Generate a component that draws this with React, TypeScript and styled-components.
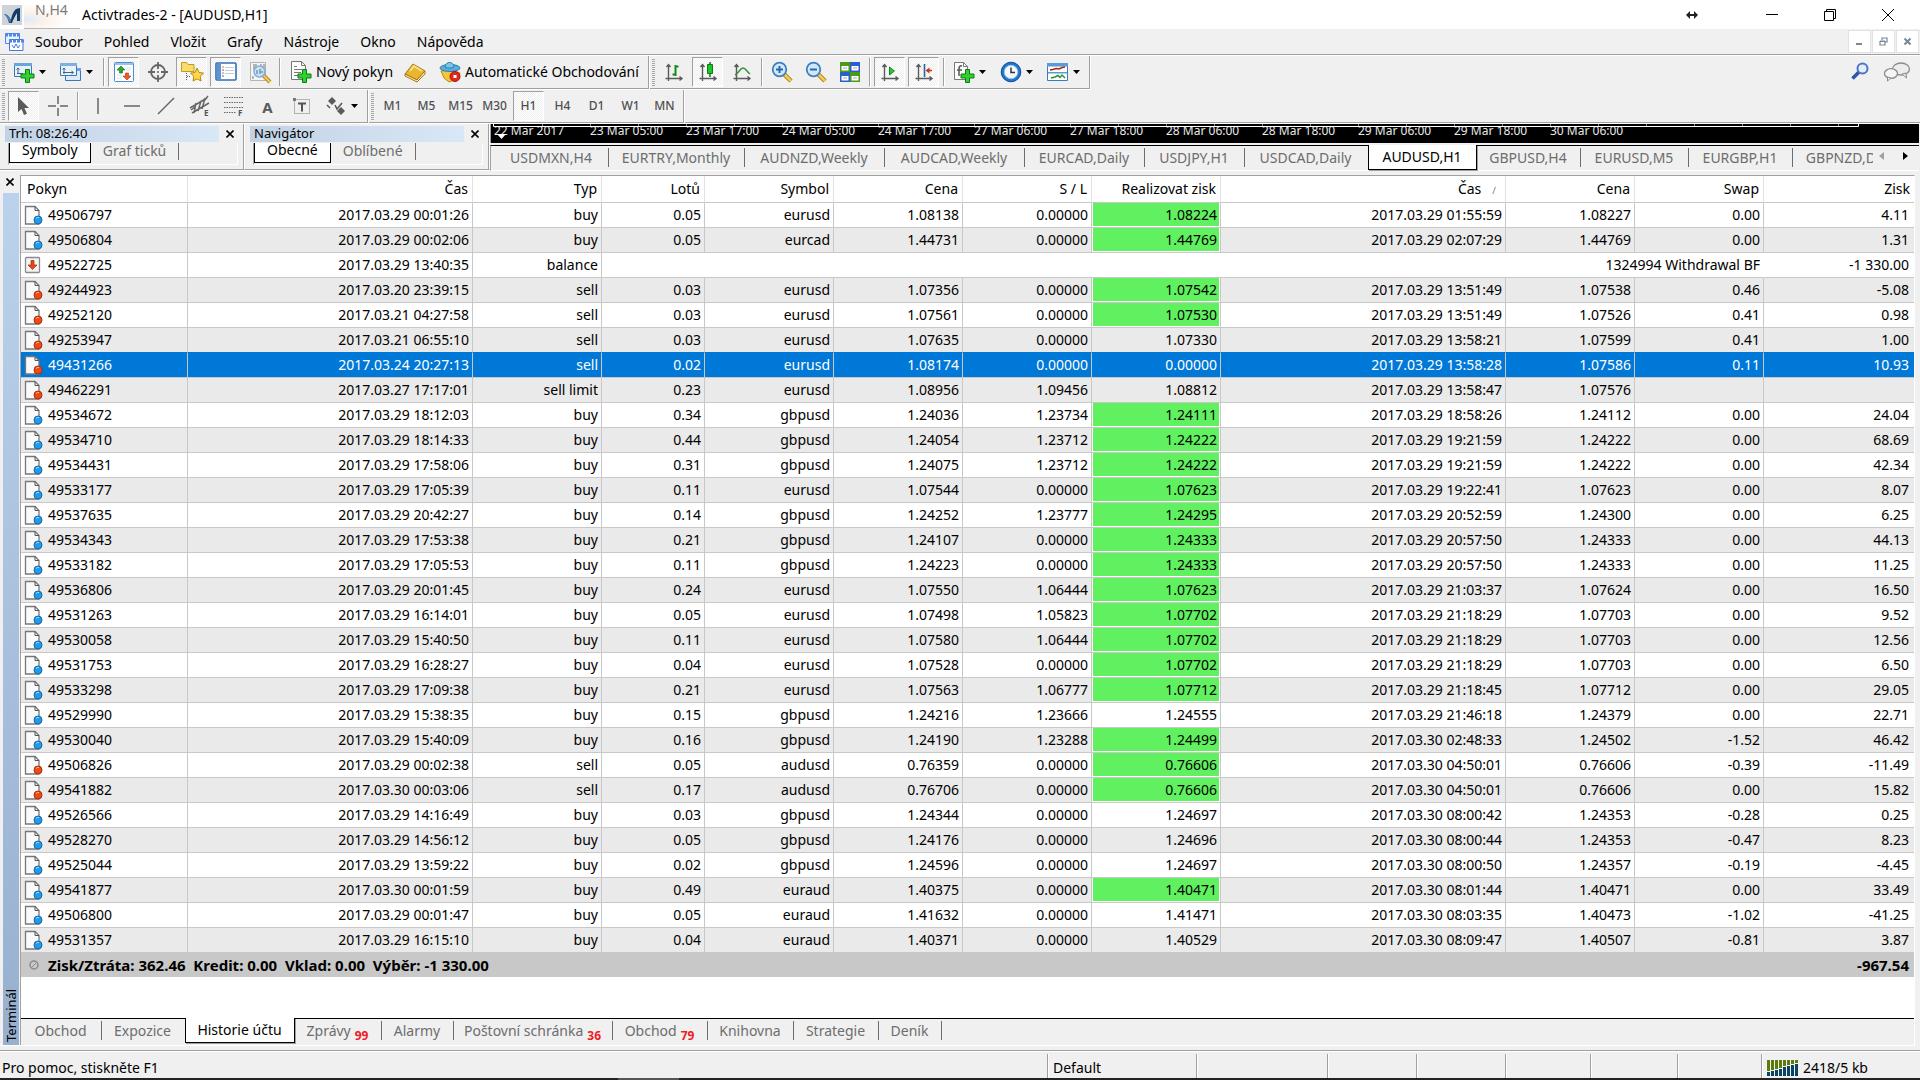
import React from "react";
import styled, { createGlobalStyle, css } from "styled-components";

const FACE = "#f0f0f0";
const EDGE = "#a0a0a0";
const GRID = "#c8c8c8";
const MUTED = "#6d6d6d";

const GlobalStyle = createGlobalStyle`
  *, *::before, *::after { box-sizing: border-box; }
  body {
    margin: 0;
    background: ${FACE};
    color: #000;
    font: 14px/20px "Noto Sans", "Open Sans", sans-serif;
  }
  button {
    margin: 0;
    padding: 0;
    border: 0;
    background: none;
    color: inherit;
    font: inherit;
    white-space: nowrap;
  }
  svg { display: block; flex: none; }
`;

const Window = styled.div`
  display: flex;
  flex-direction: column;
  min-height: 100vh;
  overflow: hidden;
`;

/* ---------- title bar and menu ---------- */

const TitleBar = styled.header`
  display: flex;
  align-items: center;
  height: 29px;
  padding: 0 3px 0 2px;
  background: #fff;
`;

const Ghost = styled.span`
  width: 56px;
  margin: 0 2px;
  padding: 0 0 8px 11px;
  color: #7c7c7c;
  line-height: 20px;
  background: radial-gradient(ellipse at 0 70%, #dceaf6 0, #fdf3ec 30%, #fff 60%);
  border-bottom: 1px solid #b8b4b0;
`;

const Title = styled.h1`
  flex: 1;
  margin: 0;
  font-size: 14px;
  font-weight: 400;
`;

const ResizeMark = styled.span`
  padding-right: 45px;
`;

const CaptionButton = styled.button`
  display: grid;
  place-items: center;
  width: 58px;
  height: 29px;
`;

const MenuBar = styled.nav`
  display: flex;
  align-items: center;
  height: 27px;
  padding: 0 1px 1px 4px;
  border-bottom: 1px solid #fff;
  box-shadow: inset 0 -1px 0 ${EDGE};
`;

const MenuList = styled.div`
  display: flex;
  flex: 1;
  gap: 21px;
  margin-left: 10px;
`;

const ChildButton = styled.button`
  display: grid;
  place-items: center;
  width: 23px;
  height: 23px;
  margin-left: 1px;
  border: 1px solid #e2e2e2;
  background: #fff;
`;

/* ---------- toolbars ---------- */

const ToolRow = styled.div`
  display: flex;
  height: 34px;
  padding-right: 8px;
`;

const LastToolRow = styled(ToolRow)`
  border-bottom: 1px solid #fff;
  box-shadow: inset 0 -1px 0 ${EDGE};
`;

const Toolbar = styled.div<{ $open?: boolean }>`
  display: flex;
  align-items: center;
  gap: 3px;
  height: 33px;
  padding: 0 3px 1px 2px;
  margin-right: 1px;
  border-right: 1px solid ${EDGE};
  box-shadow: 1px 0 0 #fff;
  ${(p) =>
    !p.$open &&
    css`
      border-bottom: 1px solid ${EDGE};
      box-shadow: 1px 1px 0 #fff;
      padding-bottom: 0;
    `}
`;

const Handle = styled.span`
  width: 3px;
  height: 27px;
  background: repeating-linear-gradient(#a8a8a8 0 1px, ${FACE} 1px 2px);
`;

const Divider = styled.span`
  width: 2px;
  height: 28px;
  margin-left: 1px;
  background: linear-gradient(90deg, ${EDGE} 50%, #fff 50%);
`;

const ToolButton = styled.button<{ $on?: boolean }>`
  display: flex;
  align-items: center;
  justify-content: center;
  width: 31px;
  height: 30px;
  border: 1px solid transparent;
  ${(p) =>
    p.$on &&
    css`
      border-color: ${EDGE} #fff #fff ${EDGE};
      background: repeating-conic-gradient(#fff 0 25%, #efefef 0 50%) 0 0 / 2px 2px;
    `}
`;

const PeriodButton = styled(ToolButton)`
  color: #505050;
  font-size: 12px;
  font-weight: 500;
`;

const DropButton = styled(ToolButton)`
  justify-content: flex-start;
  gap: 4px;
  width: 44px;
  padding-left: 4px;
`;

const CaptionedTool = styled(ToolButton)<{ $width: number }>`
  justify-content: flex-start;
  gap: 4px;
  width: ${(p) => p.$width}px;
  padding-left: 5px;
`;

const RowTail = styled.div`
  display: flex;
  align-items: flex-start;
  gap: 14px;
  margin-left: auto;
  padding: 6px 1px 0 0;
`;

/* ---------- docked panes ---------- */

const Panes = styled.div`
  display: flex;
  height: 47px;
`;

const DockPane = styled.section`
  width: 245px;
  height: 46px;
  padding: 2px 6px 5px 5px;
  border-right: 1px solid #fff;
  border-bottom: 1px solid ${EDGE};
  box-shadow: inset -1px 0 0 ${EDGE}, 0 1px 0 #fff;
`;

const PaneHead = styled.div`
  display: flex;
  justify-content: space-between;
  align-items: center;
  height: 16px;
  padding-right: 2px;
`;

const PaneName = styled.h2`
  flex: 1;
  height: 16px;
  margin: 0 4px 0 0;
  padding-left: 4px;
  font-size: 13px;
  font-weight: 400;
  line-height: 15px;
  background: linear-gradient(90deg, #c1d2e4, #d9e8f6);
`;

const CloseButton = styled.button`
  display: grid;
  place-items: center;
  width: 13px;
  height: 13px;
`;

const PaneTabs = styled.div`
  display: flex;
  height: 22px;
  margin: 1px 0 0 3px;
  border-right: 1px solid #fff;
  border-bottom: 1px solid #fff;
  border-left: 1px solid ${EDGE};
`;

const PaneTab = styled.button<{ $on?: boolean }>`
  height: 20px;
  padding: 0 12px;
  color: ${MUTED};
  line-height: 14px;
  padding-bottom: 5px;
  ${(p) =>
    p.$on
      ? css`
          border: solid #000;
          border-width: 0 1px 1px;
          background: #fff;
          color: #000;
        `
      : css`
          height: 17px;
          padding-bottom: 2px;
          border-right: 1px solid ${MUTED};
        `}
`;

const ChartPane = styled.section`
  display: flex;
  flex: 1;
  flex-direction: column;
  min-width: 0;
  margin-right: 1px;
`;

const TimeAxis = styled.div`
  position: relative;
  display: flex;
  height: 19px;
  padding-left: 3px;
  background: #000;
  color: #e8e8e8;
  border-left: 1px solid ${EDGE};
`;

const AxisLine = styled.svg`
  position: absolute;
  top: 0;
  left: 0;
`;

const AxisLabel = styled.span`
  flex: none;
  width: 96px;
  font-size: 12px;
  line-height: 13px;
  white-space: nowrap;
`;

const ChartTabs = styled.div`
  display: flex;
  height: 26px;
  margin-top: 2px;
  border-top: 1px solid #000;
  border-bottom: 1px solid #fff;
  border-left: 1px solid ${EDGE};
`;

const ClippedTabs = styled.div`
  display: flex;
  flex: 1;
  min-width: 0;
  height: 26px;
  margin-top: -1px;
  padding: 1px 0 0 4px;
  overflow: hidden;
`;

const Tab = styled.button<{ $width: number; $on?: boolean; $last?: boolean }>`
  display: flex;
  flex: none;
  align-items: center;
  justify-content: center;
  gap: 4px;
  width: ${(p) => p.$width}px;
  height: 19px;
  margin-top: 2px;
  padding-right: 1px;
  border-right: 1px solid ${(p) => (p.$last ? "transparent" : MUTED)};
  color: ${MUTED};
  ${(p) =>
    p.$on &&
    css`
      height: 25px;
      margin-top: -1px;
      border: solid #000;
      border-width: 0 1px 1px;
      background: #fff;
      box-shadow: 1px 1px 0 ${EDGE};
      color: #000;
    `}
`;

const Scroller = styled.div`
  display: flex;
  align-items: center;
  gap: 16px;
  width: 46px;
  padding: 0 0 4px 6px;
`;

const ScrollButton = styled.button`
  width: 8px;
`;

/* ---------- terminal ---------- */

const Terminal = styled.section`
  display: flex;
  flex: 1;
  margin: 4px 5px 4px 0;
  border-bottom: 1px solid #fff;
`;

const SideRail = styled.div`
  display: flex;
  flex-direction: column;
  width: 20px;
  padding: 0 1px 0 3px;
`;

const RailGrip = styled.div`
  flex: 1;
  width: 16px;
  margin-top: 5px;
  padding-top: 3px;
  background: linear-gradient(#97b0cf, #bbd2ec);
  writing-mode: vertical-rl;
  transform: rotate(180deg);
  font-size: 13px;
  line-height: 16px;
`;

const Ledger = styled.div`
  display: flex;
  flex: 1;
  flex-direction: column;
  min-width: 0;
  border-top: 1px solid ${EDGE};
  border-right: 1px solid #fff;
  border-left: 1px solid ${EDGE};
`;

const Sheet = styled.div`
  flex: 1;
  background: #fff;
`;

const Table = styled.table`
  width: 100%;
  table-layout: fixed;
  border-collapse: separate;
  border-spacing: 0;
  text-align: right;
`;

const HeadCell = styled.th<{ $left?: boolean }>`
  height: 27px;
  padding: 0 4px 0 6px;
  border-right: 1px solid #e2e2e2;
  border-bottom: 1px solid ${GRID};
  font-weight: 400;
  line-height: 24px;
  text-align: ${(p) => (p.$left ? "left" : "right")};
  white-space: nowrap;
  &:last-child { border-right: 0; }
`;

const SortMark = styled.span`
  padding: 0 5px 0 11px;
  color: #777;
  font-size: 10px;
  line-height: 10px;
`;

const Cell = styled.td<{ $hit?: boolean; $bare?: boolean }>`
  height: 25px;
  padding: 0 3px;
  border-right: 1px solid ${(p) => (p.$bare ? "transparent" : GRID)};
  border-bottom: 1px solid ${GRID};
  line-height: 24px;
  white-space: nowrap;
  &:last-child {
    padding-right: 5px;
    border-right: 0;
  }
  ${(p) =>
    p.$hit &&
    css`
      background: #60f060;
      box-shadow: inset 1px 0 0 #fff, inset -1px -1px 0 #fff;
    `}
`;

const Row = styled.tr<{ $selected?: boolean; $beforeSelected?: boolean }>`
  &:nth-child(even) { background: #eaeaea; }
  &:last-child ${Cell} {
    height: 24px;
    border-bottom: 0;
  }
  ${(p) => p.$beforeSelected && css`${Cell} { border-bottom-color: #0078d7; }`}
  ${(p) =>
    p.$selected &&
    css`
      &&& { background: #0078d7; }
      color: #fff;
    `}
`;

const Ticket = styled.span`
  display: flex;
  align-items: center;
  gap: 5px;
`;

const SummaryCell = styled.td<{ $left?: boolean }>`
  height: 25px;
  padding: 0 5px 0 3px;
  background: ${GRID};
  font-size: 15px;
  font-weight: 700;
  text-align: ${(p) => (p.$left ? "left" : "right")};
  white-space: pre;
`;

const TerminalTabs = styled.div`
  display: flex;
  height: 27px;
  border-top: 1px solid #000;
`;

const Badge = styled.span`
  align-self: flex-end;
  color: #ee1c25;
  font-size: 12px;
  font-weight: 700;
  line-height: 8px;
`;

/* ---------- status bar ---------- */

const StatusBar = styled.footer`
  display: flex;
  height: 28px;
  padding-top: 3px;
  border-top: 1px solid ${EDGE};
  box-shadow: inset 0 1px 0 #fff;
`;

const StatusField = styled.div<{ $width?: number }>`
  display: flex;
  align-items: center;
  gap: 5px;
  padding-top: 4px;
  padding-left: ${(p) => (p.$width ? 5 : 2)}px;
  ${(p) =>
    p.$width
      ? css`
          width: ${p.$width}px;
          border-left: 1px solid ${EDGE};
          box-shadow: inset 1px 0 0 #fff;
        `
      : css`
          flex: 1;
        `}
`;

const TaskEdge = styled.div`
  height: 2px;
  background: linear-gradient(90deg, #222 618px, #555 618px 679px, #222 679px);
`;

/* ---------- drawings ---------- */

const Icon = ({ size = 22, children }: { size?: number; children: React.ReactNode }) => (
  <svg width={size} height={size} viewBox="0 0 22 22" fill="none" overflow="visible" aria-hidden="true">
    {children}
  </svg>
);

const Arrow = () => (
  <svg width="7" height="4" viewBox="0 0 7 4" aria-hidden="true">
    <path d="M0 0h7L3.5 4z" fill="#000" />
  </svg>
);

const Cross = ({ size = 8 }: { size?: number }) => (
  <svg width={size} height={size} viewBox="0 0 8 8" aria-hidden="true">
    <path d="M.5.5l7 7M7.5.5l-7 7" stroke="#000" strokeWidth="1.6" />
  </svg>
);

const Plus = () => (
  <path d="M12.5 8.500h4v4.500h4.500v4h-4.500v4.500h-4v-4.500H8v-4h4.500z" fill="#2fd02f" stroke="#0b7d12" />
);

const Axes = () => (
  <path d="M5.500 4v16M2.500 17.500h16M3.500 6l2-2.500 2 2.500M16.500 15.500l2.500 2-2.500 2" stroke="#5a5a5a" strokeWidth="1.400" />
);

const LogoIcon = () => (
  <svg width="20" height="20" viewBox="0 0 20 20" aria-hidden="true">
    <path d="M0 0h20v20H0z" fill="#cdd3d8" />
    <path d="M2 9c3 0 5 2 7 6 1-6 3-9 5-11l4-1v13h-3V8c-2 3-4 7-5 10H7C6 14 5 11 2 9z" fill="#143c66" />
    <path d="M2 9c3 0 5 2 7 6l-1 3C6 14 5 11 2 9z" fill="#4f86b4" />
  </svg>
);

const ChildIcon = () => (
  <svg width="21" height="20" viewBox="0 0 21 20" fill="none" aria-hidden="true">
    <path d="M1.500 1.500h14v10h-14z" fill="#e8f0fc" stroke="#4f86e8" />
    <path d="M1 3h15" stroke="#4f86e8" strokeWidth="3" strokeDasharray="3 1" />
    <path d="M5.500 7.500h13.500v11H5.500z" fill="#fff" stroke="#3f78e0" />
    <path d="M5 9h15" stroke="#4f86e8" strokeWidth="3" strokeDasharray="3 1" />
    <path d="M8 13l2 3 2-4 2 4 2-3" stroke="#3f78e0" />
  </svg>
);

const NewChartIcon = () => (
  <Icon>
    <path d="M1.500 2.500h17v13h-17z" fill="#e4f1fb" stroke="#3b78b5" />
    <path d="M1 2h18v3H1z" fill="#6aa6da" />
    <path d="M5 7v6M3.500 8.500L5 7l1.500 1.500M4 12.500h6" stroke="#42627e" />
    <Plus />
  </Icon>
);

const ProfilesIcon = () => (
  <Icon>
    <path d="M5.500 7.500h15v12h-15z" fill="#dcebf8" stroke="#3b78b5" />
    <path d="M5 7h16v3H5z" fill="#6aa6da" />
    <path d="M.5 2.500h16v12H.5z" fill="#e9f3fb" stroke="#3b78b5" />
    <path d="M0 2h17v3H0z" fill="#7db2e0" />
    <path d="M4 7v6M2.500 8.500L4 7l1.500 1.500M3 11.500h10M11.500 10l2 1.500-2 1.500" stroke="#42627e" />
  </Icon>
);

const MarketIcon = () => (
  <Icon>
    <rect x="1.500" y="1.500" width="19" height="19" rx="1" fill="#fff" stroke="#4b8fd0" />
    <path d="M2 3h18" stroke="#9cc4ea" strokeWidth="2" />
    <path d="M4 7h3M4 9h3M13 7h5M13 9h5M4 14h5M4 17h5" stroke="#dbe3ea" />
    <path d="M8 5l4 4H9.500v3h-3V9H4z" fill="#27a82f" stroke="#0e7516" strokeWidth=".6" />
    <path d="M14 19l4-4h-2.500v-3h-3v3H10z" fill="#f0572a" stroke="#a8330f" strokeWidth=".6" />
  </Icon>
);

const TargetIcon = () => (
  <Icon>
    <circle cx="11" cy="11" r="7" stroke="#666" strokeWidth="1.800" />
    <path d="M11 1v7M11 14v7M1 11h7M14 11h7" stroke="#666" strokeWidth="1.800" />
    <circle cx="11" cy="11" r="1" fill="#666" />
  </Icon>
);

const NavigatorIcon = () => (
  <Icon>
    <path d="M.5 1.500h5l1.500 2h6v7H.5z" fill="#f8dc70" stroke="#c29a1e" />
    <path d="M5.500 12v8M6 15.500h3" stroke="#555" strokeDasharray="1 1" />
    <path
      d="M16 7l2 4.500 4.500.6-3.300 3.200.8 4.700-4-2.200-4 2.200.8-4.700-3.300-3.200 4.500-.6z"
      fill="#ffd84a"
      stroke="#b98409"
    />
  </Icon>
);

const TerminalIcon = () => (
  <Icon>
    <rect x="1" y="2" width="20" height="17" rx="1" fill="#fff" stroke="#2f6fb4" strokeWidth="1.600" />
    <path d="M2 3h4v15H2z" fill="#5a94d2" />
    <path d="M10 6.500h9M10 9.500h9M10 12.500h9" stroke="#c4ccd6" />
    <path d="M7.500 6h1M7.500 12h1" stroke="#d33" strokeWidth="1.500" />
    <path d="M7.500 9h1M7.500 15h1" stroke="#333" strokeWidth="1.500" />
  </Icon>
);

const TesterIcon = () => (
  <Icon>
    <path d="M1.500 1.500h15v18h-15z" fill="#f4f4f4" stroke="#b4b4b4" />
    <path d="M5 3v6M7 3v5M12 3v7M15 3v9M4 15v3" stroke="#777" />
    <path d="M14 14l7 7" stroke="#b98a1c" strokeWidth="4" />
    <path d="M14 14l7 7" stroke="#f2cc58" strokeWidth="2" />
    <circle cx="10.500" cy="10.500" r="5.500" fill="#c4e1f8" fillOpacity=".85" stroke="#7fb0dc" strokeWidth="1.500" />
    <path d="M8 9v4M11 8v5M13 10v2" stroke="#4b6c8a" />
  </Icon>
);

const OrderIcon = () => (
  <Icon>
    <path d="M1.500.5h10l4 4v14h-14z" fill="#fcfcfc" stroke="#777" />
    <path d="M11.500.5v4h4" stroke="#777" />
    <path d="M4 5.500h3M4 8.500h8M4 11.500h7M4 14.500h4" stroke="#777" />
    <Plus />
  </Icon>
);

const BookIcon = () => (
  <Icon>
    <path d="M1 13L9 3l12 7-8 9z" fill="#eab530" stroke="#a8740c" />
    <path d="M1 13l12 6 8-9v3l-8 8L1 15z" fill="#fff3c4" stroke="#a8740c" />
    <path d="M6 10l4-5 8 5" stroke="#fbe08a" strokeWidth="2" />
  </Icon>
);

const AutoIcon = () => (
  <Icon>
    <path d="M2 10l8-1 11 3-3 6-8 3-5-4z" fill="#f4c63c" stroke="#bb8a12" />
    <ellipse cx="11" cy="7" rx="10" ry="3.500" fill="#57aee0" stroke="#2c7db2" />
    <path d="M6 6c0-6 9-6 9 0-3 1.500-6 1.500-9 0z" fill="#7cc4ec" stroke="#2c7db2" />
    <circle cx="16" cy="15.500" r="5" fill="#e0281c" stroke="#a8140c" />
    <path d="M14.500 14h3v3h-3z" fill="#fff" />
  </Icon>
);

const BarChartIcon = () => (
  <Icon>
    <Axes />
    <path d="M12.500 4v11M9.500 13.500h3M12.500 5.500h3" stroke="#138a1c" strokeWidth="2" />
  </Icon>
);

const CandleIcon = () => (
  <Icon>
    <Axes />
    <path d="M13 1v15" stroke="#0b6b12" strokeWidth="1.400" />
    <path d="M10.500 3.500h5v9h-5z" fill="#1fc42a" stroke="#0b7d12" />
  </Icon>
);

const LineIcon = () => (
  <Icon>
    <Axes />
    <path d="M4 14c4-2 5-7 8-7s4 4 7 6" stroke="#3c9242" strokeWidth="1.500" />
  </Icon>
);

const ZoomIcon = ({ plus }: { plus?: boolean }) => (
  <Icon>
    <path d="M13 13l7 7" stroke="#a67a10" strokeWidth="4.500" />
    <path d="M13 13l7 7" stroke="#f3cd55" strokeWidth="2.500" />
    <circle cx="8.500" cy="8.500" r="6.800" fill="#cfe8fa" stroke="#3f7fbd" strokeWidth="1.800" />
    <path d={plus ? "M5 8.500h7M8.500 5v7" : "M5 8.500h7"} stroke="#2868a8" strokeWidth="2" />
  </Icon>
);

const TilesIcon = () => (
  <Icon>
    <path d="M1 1h10v10H1zM11 11h10v10H11z" fill="#4a9a18" />
    <path d="M11 1h10v10H11zM1 11h10v10H1z" fill="#2a5fcc" />
    <path d="M2.500 5h7v4.500h-7zM12.500 5h7v4.500h-7zM2.500 15h7v4.500h-7zM12.500 15h7v4.500h-7z" fill="#fff" />
    <path d="M4 7h4M14 7h4M4 17h4M14 17h4" stroke="#9ab" />
  </Icon>
);

const AutoScrollIcon = () => (
  <Icon>
    <Axes />
    <path d="M10.500 6v8l5-4z" fill="#2fc43a" stroke="#138a1c" />
  </Icon>
);

const ShiftIcon = () => (
  <Icon>
    <Axes />
    <path d="M11.500 3v13" stroke="#2d6398" strokeWidth="1.600" />
    <path d="M19 9.500h-5" stroke="#c03a14" strokeWidth="1.600" />
    <path d="M16.500 6.500v6l-4-3z" fill="#c03a14" />
  </Icon>
);

const IndicatorIcon = () => (
  <Icon>
    <path d="M1.500 1.500h9l4 4v13h-13z" fill="#fcfcfc" stroke="#777" />
    <path d="M10.500 1.500v4h4" stroke="#777" />
    <path d="M9 5c-3-1-3 2-3 4v6M4 9h5" stroke="#555" strokeWidth="1.500" />
    <Plus />
  </Icon>
);

const ClockIcon = () => (
  <Icon>
    <circle cx="11" cy="11" r="9.800" fill="#1f74cc" stroke="#0f4c94" />
    <circle cx="11" cy="11" r="6.800" fill="#f4f8fc" stroke="#8fc0ee" />
    <path d="M11 6.500V11.500h4" stroke="#333" strokeWidth="1.500" />
  </Icon>
);

const TemplateIcon = () => (
  <Icon>
    <path d="M.5 2.500h20v17H.5z" fill="#fff" stroke="#3a7cc0" />
    <path d="M0 2h21v3.500H0zM1 11h19v1.500H1z" fill="#5a9ad6" />
    <path d="M3 9l3-.5 3-1 3 .5 3-1.500 3-.5" stroke="#a02818" strokeWidth="1.500" />
    <path d="M4 17l4-1 3-1.500 2 2 2-2.500 3 3" stroke="#2c9236" strokeWidth="1.500" />
  </Icon>
);

const SearchIcon = () => (
  <svg width="18" height="18" viewBox="0 0 18 18" fill="none" aria-hidden="true">
    <path d="M8 10l-6.500 6.500" stroke="#2b55ae" strokeWidth="3.500" />
    <circle cx="11.500" cy="6.500" r="5" fill="#e4eefb" stroke="#4a76c8" strokeWidth="2" />
  </svg>
);

const ChatIcon = () => (
  <svg width="28" height="20" viewBox="0 0 28 20" fill="none" aria-hidden="true">
    <ellipse cx="18" cy="7" rx="8.500" ry="6" fill="#ececec" stroke="#8c8c8c" strokeWidth="1.300" />
    <path d="M19 12l4-1 .5 5z" fill="#ececec" stroke="#8c8c8c" />
    <ellipse cx="8" cy="11.500" rx="6.500" ry="4.800" fill="#f6f6f6" stroke="#8c8c8c" strokeWidth="1.300" />
    <path d="M4.500 15l3.500 1-3.500 3z" fill="#f6f6f6" stroke="#8c8c8c" />
  </svg>
);

const PointerIcon = () => (
  <Icon>
    <path d="M5 2v15l3.500-3 2.500 6 3-1.300L11.400 13H16z" fill="#5a5a5a" />
  </Icon>
);

const Strokes = ({ d }: { d: string }) => (
  <Icon><path d={d} stroke="#666" strokeWidth="1.500" /></Icon>
);

const Letter = styled.text`
  font: 700 8px "Noto Sans", sans-serif;
`;

const ChannelIcon = () => (
  <Icon>
    <path d="M1 13L18 3M3 18L20 8M5 18l2-10M9 16l3-10M13 14l3-11M2 15l4-3M15 6l4-5" stroke="#666" strokeWidth="1.500" />
    <Letter x="15" y="21" fill="#555">E</Letter>
  </Icon>
);

const FiboIcon = () => (
  <Icon>
    <path d="M1 2.500h20M1 7.500h20M1 12.500h20M1 17.500h12" stroke="#666" strokeWidth="1.200" strokeDasharray="1.500 1" />
    <Letter x="15" y="21" fill="#555">F</Letter>
  </Icon>
);

const GlyphTool = styled(ToolButton)`
  padding-top: 1px;
  color: #5a5a5a;
  font-size: 15px;
  font-weight: 700;
`;

const LabelIcon = () => (
  <Icon>
    <path d="M3.500 4.500h15v14h-15z" stroke="#777" strokeDasharray="1 1" />
    <path d="M2 3h3v3H2z" fill="#777" />
    <path d="M7 8.500h8M11 8.500v8" stroke="#555" strokeWidth="2" />
  </Icon>
);

const ShapesIcon = () => (
  <Icon>
    <path d="M7 2l4 4-4 4-4-4zM16 12l4 4-4 4-4-4z" fill="#5a5a5a" />
    <path d="M2 10l3 3M10 10l2 4 5-6" stroke="#5a5a5a" strokeWidth="1.600" />
  </Icon>
);

const PageIcon = ({ color, rim }: { color: string; rim: string }) => (
  <svg width="19" height="20" viewBox="0 0 19 20" fill="none" aria-hidden="true">
    <path d="M1.500 1.500h9.500l4 4v13.500H1.500z" fill="#fafafa" stroke="#777" strokeWidth="1.300" />
    <path d="M11 1.500v4h4" stroke="#555" />
    <circle cx="14" cy="15" r="4" fill={color} stroke={rim} />
    <path d="M12 13.500q1-1.500 3-1" stroke="#fff" strokeOpacity=".6" />
  </svg>
);

const BalanceIcon = () => (
  <svg width="19" height="20" viewBox="0 0 19 20" fill="none" aria-hidden="true">
    <rect x="1.500" y="2.500" width="14" height="15" rx="1" fill="#f4f4f4" stroke="#8a8a8a" strokeWidth="1.300" />
    <path d="M7 5.500h3V10h3l-4.500 4.500L4 10h3z" fill="#e04a18" stroke="#a02c08" strokeWidth=".7" />
  </svg>
);

const SummaryIcon = () => (
  <svg width="19" height="20" viewBox="0 0 19 20" fill="none" aria-hidden="true">
    <circle cx="10" cy="10" r="4" stroke="#8c8c8c" strokeWidth="1.500" />
    <path d="M7.500 12.500l5-5" stroke="#8c8c8c" />
  </svg>
);

const TrafficIcon = () => (
  <svg width="31" height="16" viewBox="0 0 31 16" aria-hidden="true">
    {[11, 10, 9, 8, 6, 5, 4, 3].map((h, i) => (
      <g key={i}>
        <rect x={i * 4} y="0" width="3" height={h} fill="#5d7b0c" />
        <rect x={i * 4} y={h + 1} width="3" height={15 - h} fill="#0b4463" />
      </g>
    ))}
  </svg>
);

/* ---------- data ---------- */

const menus = ["Soubor", "Pohled", "Vložit", "Grafy", "Nástroje", "Okno", "Nápověda"];
const periods = ["M1", "M5", "M15", "M30", "H1", "H4", "D1", "W1", "MN"];

const times = [
  "22 Mar 2017", "23 Mar 05:00", "23 Mar 17:00", "24 Mar 05:00", "24 Mar 17:00", "27 Mar 06:00",
  "27 Mar 18:00", "28 Mar 06:00", "28 Mar 18:00", "29 Mar 06:00", "29 Mar 18:00", "30 Mar 06:00",
];

const charts: [string, number][] = [
  ["USDMXN,H4", 114], ["EURTRY,Monthly", 136], ["AUDNZD,Weekly", 140], ["AUDCAD,Weekly", 140],
  ["EURCAD,Daily", 120], ["USDJPY,H1", 100], ["USDCAD,Daily", 123], ["AUDUSD,H1", 109],
  ["GBPUSD,H4", 104], ["EURUSD,M5", 108], ["EURGBP,H1", 104], ["GBPNZD,Daily", 120],
];

const terminalTabs: [string, number, string?][] = [
  ["Obchod", 81], ["Expozice", 83], ["Historie účtu", 110], ["Zprávy", 87, "99"], ["Alarmy", 72],
  ["Poštovní schránka", 159, "36"], ["Obchod", 95, "79"], ["Knihovna", 86], ["Strategie", 85], ["Deník", 63],
];

const columns: [string, number][] = [
  ["Pokyn", 167], ["Čas", 285], ["Typ", 129], ["Lotů", 103], ["Symbol", 129], ["Cena", 129], ["S / L", 129],
  ["Realizovat zisk", 129], ["Čas", 285], ["Cena", 129], ["Swap", 129], ["Zisk", 150],
];

/* ticket | opened | type | lots | symbol | price | S/L | T/P (* = reached) | closed | price | swap | profit */
const deals = `
49506797|2017.03.29 00:01:26|buy|0.05|eurusd|1.08138|0.00000|1.08224*|2017.03.29 01:55:59|1.08227|0.00|4.11
49506804|2017.03.29 00:02:06|buy|0.05|eurcad|1.44731|0.00000|1.44769*|2017.03.29 02:07:29|1.44769|0.00|1.31
49522725|2017.03.29 13:40:35|balance|1324994 Withdrawal BF|-1 330.00
49244923|2017.03.20 23:39:15|sell|0.03|eurusd|1.07356|0.00000|1.07542*|2017.03.29 13:51:49|1.07538|0.46|-5.08
49252120|2017.03.21 04:27:58|sell|0.03|eurusd|1.07561|0.00000|1.07530*|2017.03.29 13:51:49|1.07526|0.41|0.98
49253947|2017.03.21 06:55:10|sell|0.03|eurusd|1.07635|0.00000|1.07330|2017.03.29 13:58:21|1.07599|0.41|1.00
49431266|2017.03.24 20:27:13|sell|0.02|eurusd|1.08174|0.00000|0.00000|2017.03.29 13:58:28|1.07586|0.11|10.93
49462291|2017.03.27 17:17:01|sell limit|0.23|eurusd|1.08956|1.09456|1.08812|2017.03.29 13:58:47|1.07576||
49534672|2017.03.29 18:12:03|buy|0.34|gbpusd|1.24036|1.23734|1.24111*|2017.03.29 18:58:26|1.24112|0.00|24.04
49534710|2017.03.29 18:14:33|buy|0.44|gbpusd|1.24054|1.23712|1.24222*|2017.03.29 19:21:59|1.24222|0.00|68.69
49534431|2017.03.29 17:58:06|buy|0.31|gbpusd|1.24075|1.23712|1.24222*|2017.03.29 19:21:59|1.24222|0.00|42.34
49533177|2017.03.29 17:05:39|buy|0.11|eurusd|1.07544|0.00000|1.07623*|2017.03.29 19:22:41|1.07623|0.00|8.07
49537635|2017.03.29 20:42:27|buy|0.14|gbpusd|1.24252|1.23777|1.24295*|2017.03.29 20:52:59|1.24300|0.00|6.25
49534343|2017.03.29 17:53:38|buy|0.21|gbpusd|1.24107|0.00000|1.24333*|2017.03.29 20:57:50|1.24333|0.00|44.13
49533182|2017.03.29 17:05:53|buy|0.11|gbpusd|1.24223|0.00000|1.24333*|2017.03.29 20:57:50|1.24333|0.00|11.25
49536806|2017.03.29 20:01:45|buy|0.24|eurusd|1.07550|1.06444|1.07623*|2017.03.29 21:03:37|1.07624|0.00|16.50
49531263|2017.03.29 16:14:01|buy|0.05|eurusd|1.07498|1.05823|1.07702*|2017.03.29 21:18:29|1.07703|0.00|9.52
49530058|2017.03.29 15:40:50|buy|0.11|eurusd|1.07580|1.06444|1.07702*|2017.03.29 21:18:29|1.07703|0.00|12.56
49531753|2017.03.29 16:28:27|buy|0.04|eurusd|1.07528|0.00000|1.07702*|2017.03.29 21:18:29|1.07703|0.00|6.50
49533298|2017.03.29 17:09:38|buy|0.21|eurusd|1.07563|1.06777|1.07712*|2017.03.29 21:18:45|1.07712|0.00|29.05
49529990|2017.03.29 15:38:35|buy|0.15|gbpusd|1.24216|1.23666|1.24555|2017.03.29 21:46:18|1.24379|0.00|22.71
49530040|2017.03.29 15:40:09|buy|0.16|gbpusd|1.24190|1.23288|1.24499*|2017.03.30 02:48:33|1.24502|-1.52|46.42
49506826|2017.03.29 00:02:38|sell|0.05|audusd|0.76359|0.00000|0.76606*|2017.03.30 04:50:01|0.76606|-0.39|-11.49
49541882|2017.03.30 00:03:06|sell|0.17|audusd|0.76706|0.00000|0.76606*|2017.03.30 04:50:01|0.76606|0.00|15.82
49526566|2017.03.29 14:16:49|buy|0.03|gbpusd|1.24344|0.00000|1.24697|2017.03.30 08:00:42|1.24353|-0.28|0.25
49528270|2017.03.29 14:56:12|buy|0.05|gbpusd|1.24176|0.00000|1.24696|2017.03.30 08:00:44|1.24353|-0.47|8.23
49525044|2017.03.29 13:59:22|buy|0.02|gbpusd|1.24596|0.00000|1.24697|2017.03.30 08:00:50|1.24357|-0.19|-4.45
49541877|2017.03.30 00:01:59|buy|0.49|euraud|1.40375|0.00000|1.40471*|2017.03.30 08:01:44|1.40471|0.00|33.49
49506800|2017.03.29 00:01:47|buy|0.05|euraud|1.41632|0.00000|1.41471|2017.03.30 08:03:35|1.40473|-1.02|-41.25
49531357|2017.03.29 16:15:10|buy|0.04|euraud|1.40371|0.00000|1.40529|2017.03.30 08:09:47|1.40507|-0.81|3.87
`.trim().split("\n").map((line) => line.split("|"));

const SELECTED = 6;

/* ---------- parts ---------- */

const TicketCell = ({ id, type }: { id: string; type: string }) => (
  <Cell>
    <Ticket>
      {type === "balance" && <BalanceIcon />}
      {type === "buy" && <PageIcon color="#1e9cec" rim="#1668a8" />}
      {type.startsWith("sell") && <PageIcon color="#f04a14" rim="#a83010" />}
      {id}
    </Ticket>
  </Cell>
);

const DealRow = ({ deal, index }: { deal: string[]; index: number }) => {
  const [id, opened, type, ...rest] = deal;
  return (
    <Row $selected={index === SELECTED} $beforeSelected={index === SELECTED - 1}>
      <TicketCell id={id} type={type} />
      <Cell>{opened}</Cell>
      <Cell>{type}</Cell>
      {rest.map((value, i) => (
        <Cell
          key={i}
          colSpan={type === "balance" && i === 0 ? 8 : 1}
          $bare={type === "balance"}
          $hit={value.endsWith("*")}
        >
          {value.replace("*", "")}
        </Cell>
      ))}
    </Row>
  );
};

const Dock = ({ name, tabs }: { name: string; tabs: string[] }) => (
  <DockPane>
    <PaneHead>
      <PaneName>{name}</PaneName>
      <CloseButton aria-label={`Zavřít ${name}`}><Cross /></CloseButton>
    </PaneHead>
    <PaneTabs>
      {tabs.map((tab, i) => <PaneTab key={tab} $on={i === 0}>{tab}</PaneTab>)}
    </PaneTabs>
  </DockPane>
);

const Tool = ({ name, on, children }: { name: string; on?: boolean; children: React.ReactNode }) => (
  <ToolButton aria-label={name} aria-pressed={on} $on={on}>{children}</ToolButton>
);

const Drop = ({ name, children }: { name: string; children: React.ReactNode }) => (
  <DropButton aria-label={name}>{children}<Arrow /></DropButton>
);

export default function App() {
  return (
    <Window>
      <GlobalStyle />
      <TitleBar>
        <LogoIcon />
        <Ghost>N,H4</Ghost>
        <Title>Activtrades-2 - [AUDUSD,H1]</Title>
        <ResizeMark>
          <svg width="12" height="8" viewBox="0 0 12 8" aria-hidden="true">
            <path d="M0 4l4-4v3h4V0l4 4-4 4V5H4v3z" fill="#222" />
          </svg>
        </ResizeMark>
        <CaptionButton aria-label="Minimalizovat">
          <svg width="12" height="12"><path d="M0 5.500h12" stroke="#000" /></svg>
        </CaptionButton>
        <CaptionButton aria-label="Obnovit">
          <svg width="12" height="12" fill="none"><path d="M.5 2.500h9v9h-9zM2.500 2V.5h9v9H10" stroke="#000" /></svg>
        </CaptionButton>
        <CaptionButton aria-label="Zavřít">
          <svg width="12" height="12"><path d="M0 0l12 12M12 0L0 12" stroke="#000" /></svg>
        </CaptionButton>
      </TitleBar>

      <MenuBar>
        <ChildIcon />
        <MenuList>{menus.map((m) => <button key={m}>{m}</button>)}</MenuList>
        <ChildButton aria-label="Minimalizovat graf">
          <svg width="9" height="9"><path d="M1 7h6" stroke="#7a8796" strokeWidth="2" /></svg>
        </ChildButton>
        <ChildButton aria-label="Obnovit graf">
          <svg width="9" height="9" fill="none"><path d="M1 4.500h5v3.500H1zM3 3V1h5v4H6.500M1 4h5M3 1h5" stroke="#7a8796" strokeWidth="1.200" /></svg>
        </ChildButton>
        <ChildButton aria-label="Zavřít graf">
          <svg width="9" height="9"><path d="M1.500 1.500l6 6M7.500 1.500l-6 6" stroke="#7a8796" strokeWidth="2" /></svg>
        </ChildButton>
      </MenuBar>

      <ToolRow>
        <Toolbar>
          <Handle />
          <Drop name="Nový graf"><NewChartIcon /></Drop>
          <Drop name="Profily"><ProfilesIcon /></Drop>
          <Divider />
          <Tool name="Trh" on><MarketIcon /></Tool>
          <Tool name="Okno dat"><TargetIcon /></Tool>
          <Tool name="Navigátor" on><NavigatorIcon /></Tool>
          <Tool name="Terminál" on><TerminalIcon /></Tool>
          <Tool name="Tester strategií"><TesterIcon /></Tool>
          <Divider />
          <CaptionedTool $width={112}><OrderIcon />Nový pokyn</CaptionedTool>
          <Tool name="MetaEditor"><BookIcon /></Tool>
          <CaptionedTool $width={212}><AutoIcon />Automatické Obchodování</CaptionedTool>
        </Toolbar>
        <Toolbar>
          <Handle />
          <Tool name="Sloupcový graf"><BarChartIcon /></Tool>
          <Tool name="Svíčkový graf" on><CandleIcon /></Tool>
          <Tool name="Čárový graf"><LineIcon /></Tool>
          <Divider />
          <Tool name="Přiblížit"><ZoomIcon plus /></Tool>
          <Tool name="Oddálit"><ZoomIcon /></Tool>
          <Tool name="Dlaždice"><TilesIcon /></Tool>
          <Divider />
          <Tool name="Automatické rolování" on><AutoScrollIcon /></Tool>
          <Tool name="Posun grafu" on><ShiftIcon /></Tool>
          <Divider />
          <Drop name="Indikátory"><IndicatorIcon /></Drop>
          <Drop name="Periody"><ClockIcon /></Drop>
          <Drop name="Šablony"><TemplateIcon /></Drop>
        </Toolbar>
        <RowTail>
          <button aria-label="Hledat"><SearchIcon /></button>
          <button aria-label="Zprávy"><ChatIcon /></button>
        </RowTail>
      </ToolRow>

      <LastToolRow>
        <Toolbar $open>
          <Handle />
          <Tool name="Kurzor" on><PointerIcon /></Tool>
          <Tool name="Nitkový kříž"><Strokes d="M11 1v8M11 13v8M1 11h8M13 11h8" /></Tool>
          <Divider />
          <Tool name="Svislá čára"><Strokes d="M11 3v16" /></Tool>
          <Tool name="Vodorovná čára"><Strokes d="M3 11h16" /></Tool>
          <Tool name="Trendová čára"><Strokes d="M3 19L19 3" /></Tool>
          <Tool name="Kanál"><ChannelIcon /></Tool>
          <Tool name="Fibonacci"><FiboIcon /></Tool>
          <GlyphTool aria-label="Text">A</GlyphTool>
          <Tool name="Textový štítek"><LabelIcon /></Tool>
          <Drop name="Šipky"><ShapesIcon /></Drop>
        </Toolbar>
        <Toolbar $open>
          <Handle />
          {periods.map((p) => <PeriodButton key={p} $on={p === "H1"}>{p}</PeriodButton>)}
        </Toolbar>
      </LastToolRow>

      <Panes>
        <Dock name="Trh: 08:26:40" tabs={["Symboly", "Graf ticků"]} />
        <Dock name="Navigátor" tabs={["Obecné", "Oblíbené"]} />
        <ChartPane>
          <TimeAxis>
            {times.map((t) => <AxisLabel key={t}>{t}</AxisLabel>)}
            <AxisLine width="1368" height="19" fill="none" aria-hidden="true">
              <path d="M2.500 0v2.500H1367.500V0" stroke="#fff" />
              <path d="M51.500 0v2M99.500 0v2M147.500 0v2M195.500 0v2M243.500 0v2M291.500 0v2M339.500 0v2M387.500 0v2M435.500 0v2M483.500 0v2M531.500 0v2M579.500 0v2M627.500 0v2M675.500 0v2M723.500 0v2M771.500 0v2M819.500 0v2M867.500 0v2M915.500 0v2M963.500 0v2M1011.500 0v2M1059.500 0v2M1107.500 0v2M1155.500 0v2M1203.500 0v2M1251.500 0v2M1299.500 0v2M1347.500 0v2" stroke="#888" />
              <path d="M6 10h9l-4.500 5z" fill="#fff" />
            </AxisLine>
          </TimeAxis>
          <ChartTabs>
            <ClippedTabs>
              {charts.map(([name, width], i) => (
                <Tab key={name} $width={width} $on={i === 7} $last={i === 6}>{name}</Tab>
              ))}
            </ClippedTabs>
            <Scroller>
              <ScrollButton aria-label="Předchozí grafy">
                <svg width="5" height="8"><path d="M5 0v8L0 4z" fill="#a0a0a0" /></svg>
              </ScrollButton>
              <ScrollButton aria-label="Další grafy">
                <svg width="5" height="8"><path d="M0 0v8l5-4z" fill="#000" /></svg>
              </ScrollButton>
            </Scroller>
          </ChartTabs>
        </ChartPane>
      </Panes>

      <Terminal>
        <SideRail>
          <CloseButton aria-label="Zavřít terminál"><Cross /></CloseButton>
          <RailGrip>Terminál</RailGrip>
        </SideRail>
        <Ledger>
          <Sheet>
            <Table>
              <colgroup>{columns.map(([, width], i) => <col key={i} width={width} />)}</colgroup>
              <thead>
                <tr>
                  {columns.map(([name], i) => (
                    <HeadCell key={i} scope="col" $left={i === 0}>
                      {name}
                      {i === 8 && <SortMark>∕</SortMark>}
                    </HeadCell>
                  ))}
                </tr>
              </thead>
              <tbody>
                {deals.map((deal, i) => <DealRow key={deal[0]} deal={deal} index={i} />)}
              </tbody>
              <tfoot>
                <tr>
                  <SummaryCell colSpan={11} $left>
                    <Ticket>
                      <SummaryIcon />
                      {"Zisk/Ztráta: 362.46  Kredit: 0.00  Vklad: 0.00  Výběr: -1 330.00"}
                    </Ticket>
                  </SummaryCell>
                  <SummaryCell>-967.54</SummaryCell>
                </tr>
              </tfoot>
            </Table>
          </Sheet>
          <TerminalTabs>
            {terminalTabs.map(([name, width, count], i) => (
              <Tab key={i} $width={width} $on={i === 2} $last={i === 1}>
                {name}
                {count && <Badge>{count}</Badge>}
              </Tab>
            ))}
          </TerminalTabs>
        </Ledger>
      </Terminal>

      <StatusBar>
        <StatusField>Pro pomoc, stiskněte F1</StatusField>
        <StatusField $width={149}>Default</StatusField>
        <StatusField $width={131} />
        <StatusField $width={89} />
        <StatusField $width={89} />
        <StatusField $width={85} />
        <StatusField $width={87} />
        <StatusField $width={84} />
        <StatusField $width={159}><TrafficIcon />2418/5 kb</StatusField>
      </StatusBar>
      <TaskEdge />
    </Window>
  );
}
